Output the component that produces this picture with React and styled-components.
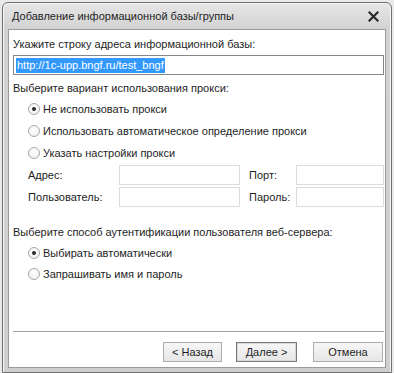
import React from "react";
import styled, { createGlobalStyle } from "styled-components";

const Global = createGlobalStyle`
  html, body { margin: 0; padding: 0; }
  body {
    background: #e9e9e9;
    width: 394px;
    height: 373px;
    overflow: hidden;
    font-family: "Liberation Sans", Arial, sans-serif;
  }
`;

const Window = styled.div`
  box-sizing: border-box;
  margin: 2px 0 0 2px;
  width: 390px;
  height: 371px;
  border: 1px solid #707070;
  border-radius: 6px 6px 0 0;
  background: linear-gradient(#e6e6e6, #d2d2d2 26px, #cfcfcf);
  display: flex;
  flex-direction: column;
  padding: 0 5px 4px 5px;
  box-shadow: inset 1px 1px 0 #f4f4f4, inset -1px 0 0 #f4f4f4;
`;

const TitleBar = styled.div`
  height: 26px;
  display: flex;
  align-items: center;
  justify-content: space-between;
  padding: 0 4px 0 4px;
`;

const Title = styled.div`
  font-family: "Liberation Sans", Arial, sans-serif;
  font-size: 11px;
  color: #1e1e1e;
`;

const Close = styled.svg`
  width: 11px;
  height: 11px;
  margin-right: 3px;
`;

const Content = styled.div`
  flex: 1;
  background: #fff;
  border: 1px solid #9a9a9a;
  display: flex;
  flex-direction: column;
  padding: 7px 0 0 4px;
  font-size: 11px;
  color: #1e1e1e;
`;

const Label = styled.div`
  height: 14px;
  line-height: 14px;
  margin-top: ${(p) => p.$mt || 0}px;
  white-space: nowrap;
`;

const UrlInput = styled.div`
  box-sizing: border-box;
  margin-top: 4px;
  width: 371px;
  height: 20px;
  border: 1px solid #828790;
  display: flex;
  align-items: center;
  padding-left: 2px;
`;

const Selected = styled.span`
  background: #3399ff;
  color: #fff;
  line-height: 15px;
  padding: 0 1px;
`;

const RadioRow = styled.div`
  display: flex;
  align-items: center;
  height: ${(p) => p.$h || 22}px;
  padding-left: 15px;
  gap: 3px;
  white-space: nowrap;
`;

const RadioCircle = styled.span`
  box-sizing: border-box;
  width: 12px;
  height: 12px;
  border-radius: 50%;
  border: 1px solid #a9a9a9;
  background: radial-gradient(circle at 50% 40%, #ffffff, #ececec);
  display: flex;
  align-items: center;
  justify-content: center;
  &::after {
    content: "";
    display: ${(p) => (p.$checked ? "block" : "none")};
    width: 4px;
    height: 4px;
    border-radius: 50%;
    background: #2a2a2a;
  }
`;

const ProxyGrid = styled.div`
  display: grid;
  grid-template-columns: 91px 121px 56px 88px;
  grid-auto-rows: 20px;
  row-gap: 2px;
  align-items: center;
  padding-left: 15px;
  margin-top: 1px;
`;

const Field = styled.div`
  box-sizing: border-box;
  height: 20px;
  border: 1px solid #dcdcdc;
  background: #fff;
`;

const FieldLabel = styled.span`
  padding-left: ${(p) => p.$pl || 0}px;
`;

const Spacer = styled.div`
  flex: 1;
`;

const Separator = styled.div`
  width: 371px;
  height: 1px;
  background: #a0a0a0;
`;

const ButtonBar = styled.div`
  display: flex;
  justify-content: flex-end;
  align-items: center;
  padding: 10px 2px 5px 0;
`;

const Button = styled.div`
  box-sizing: border-box;
  width: ${(p) => p.$w}px;
  height: 20px;
  margin-left: ${(p) => p.$ml}px;
  border: 1px solid ${(p) => (p.$default ? "#7a7a7a" : "#acacac")};
  box-shadow: ${(p) => (p.$default ? "inset 0 0 0 1px #d6d6d6" : "none")};
  background: linear-gradient(#f7f7f7, #e6e6e6);
  display: flex;
  align-items: center;
  justify-content: center;
  font-size: 11px;
  color: #1e1e1e;
`;

function Radio({ checked, children, h }) {
  return (
    <RadioRow $h={h}>
      <RadioCircle $checked={checked} />
      <span>{children}</span>
    </RadioRow>
  );
}

export default function App() {
  return (
    <>
      <Global />
      <Window>
        <TitleBar>
          <Title>Добавление информационной базы/группы</Title>
          <Close viewBox="0 0 11 11">
            <path d="M1.5 1.5 L9.5 9.5 M9.5 1.5 L1.5 9.5" stroke="#2b2b2b" strokeWidth="2.2" strokeLinecap="square" />
          </Close>
        </TitleBar>
        <Content>
          <Label>Укажите строку адреса информационной базы:</Label>
          <UrlInput>
            <Selected>http://1c-upp.bngf.ru/test_bngf</Selected>
          </UrlInput>
          <Label $mt={6}>Выберите вариант использования прокси:</Label>
          <div style={{ height: 3 }} />
          <Radio checked>Не использовать прокси</Radio>
          <Radio>Использовать автоматическое определение прокси</Radio>
          <Radio>Указать настройки прокси</Radio>
          <ProxyGrid>
            <FieldLabel>Адрес:</FieldLabel>
            <Field />
            <FieldLabel $pl={9}>Порт:</FieldLabel>
            <Field />
            <FieldLabel>Пользователь:</FieldLabel>
            <Field />
            <FieldLabel $pl={9}>Пароль:</FieldLabel>
            <Field />
          </ProxyGrid>
          <Label $mt={18}>Выберите способ аутентификации пользователя веб-сервера:</Label>
          <div style={{ height: 3 }} />
          <Radio checked h={21}>Выбирать автоматически</Radio>
          <Radio h={21}>Запрашивать имя и пароль</Radio>
          <Spacer />
          <Separator />
          <ButtonBar>
            <Button $w={59} $ml={0}>&lt; Назад</Button>
            <Button $w={61} $ml={14} $default>Далее &gt;</Button>
            <Button $w={70} $ml={16}>Отмена</Button>
          </ButtonBar>
        </Content>
      </Window>
    </>
  );
}
